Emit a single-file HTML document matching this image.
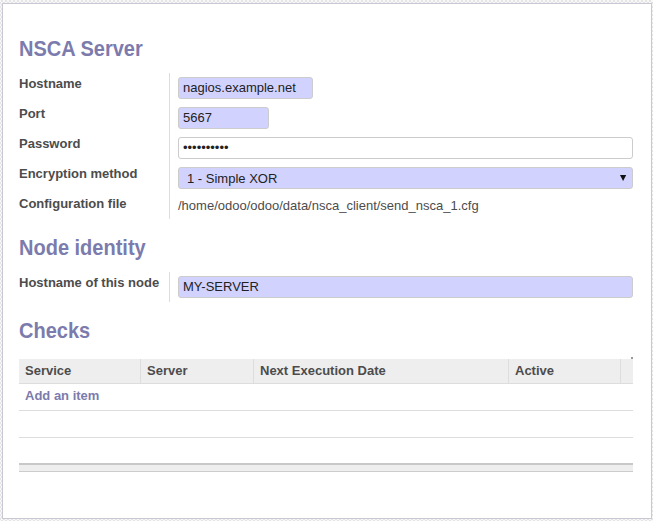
<!DOCTYPE html>
<html><head><meta charset="utf-8">
<style>
html,body{margin:0;padding:0;}
body{width:653px;height:521px;overflow:hidden;position:relative;font-family:"Liberation Sans",sans-serif;font-size:13px;color:#4c4c4c;
background-color:#f8f8f8;
background-image:conic-gradient(#f8f8f8 0 25%,#e4e4e4 0 50%,#f8f8f8 0 75%,#e4e4e4 0);
background-size:4px 4px;background-position:1px 0;}
.sheet{position:absolute;left:2px;top:3px;width:648px;height:514px;border:1px solid #c9c9d6;background:#fff;}
.abs{position:absolute;white-space:nowrap;}
.sep{font-weight:bold;font-size:20px;color:#7c7bad;transform:scaleY(1.07);transform-origin:0 18px;}
.lbl{font-weight:bold;color:#4c4c4c;}
.vline{position:absolute;left:169px;width:1px;background:#ddd;}
.inp{position:absolute;box-sizing:border-box;border:1px solid #ccc;border-radius:3px;background:#d2d2ff;color:#222;padding-left:4px;line-height:20px;}
.csep{position:absolute;top:359px;width:1px;height:24px;background:#ddd;}
</style></head><body>
<div class="sheet"></div>
<div class="abs sep" style="left:19px;top:38px;">NSCA Server</div>
<div class="vline" style="top:73px;height:146px;"></div>
<div class="abs lbl" style="left:19px;top:76px;">Hostname</div>
<div class="abs lbl" style="left:19px;top:106px;">Port</div>
<div class="abs lbl" style="left:19px;top:136px;">Password</div>
<div class="abs lbl" style="left:19px;top:166px;">Encryption method</div>
<div class="abs lbl" style="left:19px;top:196px;">Configuration file</div>
<div class="inp" style="left:178px;top:77px;width:135px;height:22px;">nagios.example.net</div>
<div class="inp" style="left:178px;top:107px;width:91px;height:22px;">5667</div>
<div class="inp" style="left:178px;top:137px;width:455px;height:22px;background:#fff;">••••••••••</div>
<div class="inp" style="left:178px;top:167px;width:455px;height:22px;padding-left:8px;line-height:22px;">1 - Simple XOR</div>
<svg style="position:absolute;left:620px;top:175px;" width="7" height="7" viewBox="0 0 7 7"><polygon points="0,0 6.2,0 3.1,5.9" fill="#111"/></svg>
<div class="abs" style="left:178px;top:198px;">/home/odoo/odoo/data/nsca_client/send_nsca_1.cfg</div>

<div class="abs sep" style="left:19px;top:237px;">Node identity</div>
<div class="vline" style="top:272px;height:30px;"></div>
<div class="abs lbl" style="left:19px;top:275px;">Hostname of this node</div>
<div class="inp" style="left:178px;top:276px;width:455px;height:22px;">MY-SERVER</div>

<div class="abs sep" style="left:19px;top:320px;">Checks</div>
<div style="position:absolute;left:19px;top:359px;width:614px;height:24px;background:#eee;border-bottom:1px solid #ddd;"></div>
<div class="csep" style="left:140px;"></div>
<div class="csep" style="left:253px;"></div>
<div class="csep" style="left:508px;"></div>
<div class="csep" style="left:620px;"></div>
<div style="position:absolute;left:631px;top:357px;width:2px;height:2px;background:#999;"></div>
<div class="abs lbl" style="left:25px;top:363px;">Service</div>
<div class="abs lbl" style="left:147px;top:363px;">Server</div>
<div class="abs lbl" style="left:260px;top:363px;">Next Execution Date</div>
<div class="abs lbl" style="left:515px;top:363px;">Active</div>
<div class="abs lbl" style="left:25px;top:388px;color:#7c7bad;">Add an item</div>
<div style="position:absolute;left:19px;top:410px;width:614px;height:1px;background:#ddd;"></div>
<div style="position:absolute;left:19px;top:437px;width:614px;height:1px;background:#ddd;"></div>
<div style="position:absolute;left:19px;top:463px;width:614px;height:2px;background:#c8c8c8;"></div>
<div style="position:absolute;left:19px;top:465px;width:614px;height:6px;background:#eeeeee;"></div>
<div style="position:absolute;left:19px;top:471px;width:614px;height:1px;background:#cccccc;"></div>
</body></html>
